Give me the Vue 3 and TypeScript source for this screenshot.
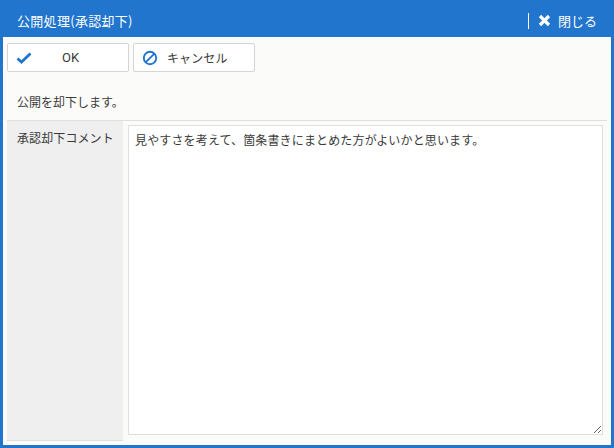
<script setup lang="ts">
const comment = '見やすさを考えて、箇条書きにまとめた方がよいかと思います。'
</script>

<template>
  <div class="dialog">
    <header class="head">
      <span class="title">公開処理(承認却下)</span>
      <button class="close" type="button">
        <svg width="13" height="13" viewBox="0 0 13 13"><path d="M2 2 11 11M11 2 2 11" stroke="#fff" stroke-width="3.2" fill="none"/></svg>
        <span>閉じる</span>
      </button>
    </header>
    <main class="body">
      <div class="actions">
        <button class="btn" type="button">
          <svg class="ico" width="16" height="14" viewBox="0 0 16 14"><path d="M1.5 7.5 5.5 11 14.5 2.5" stroke="#2175cd" stroke-width="2.8" fill="none"/></svg>
          <span class="lab ok">OK</span>
        </button>
        <button class="btn" type="button">
          <svg class="ico" width="16" height="16" viewBox="0 0 16 16"><circle cx="8" cy="8" r="6.2" stroke="#2175cd" stroke-width="1.9" fill="none"/><path d="M3.8 12.2 12.2 3.8" stroke="#2175cd" stroke-width="1.9"/></svg>
          <span class="lab">キャンセル</span>
        </button>
      </div>
      <p class="msg">公開を却下します。</p>
      <div class="row">
        <div class="label">承認却下コメント</div>
        <div class="field"><textarea class="area" :value="comment"></textarea></div>
      </div>
    </main>
  </div>
</template>

<style>
html, body { margin: 0; padding: 0; }
</style>

<style scoped>
.dialog {
  box-sizing: border-box;
  width: 614px;
  height: 448px;
  display: flex;
  flex-direction: column;
  border: 3px solid #2175cd;
  border-top: 0;
  background: #fbfbf9;
  font-family: "Noto Sans CJK JP", Roboto, sans-serif;
  font-size: 12px;
  color: #3a3a3a;
}
.head {
  flex: none;
  height: 37px;
  margin: 0 -3px;
  padding: 4px 17px 0 17px;
  box-sizing: border-box;
  display: flex;
  align-items: center;
  justify-content: space-between;
  background: #2175cd;
  color: #fff;
}
.title { font-size: 13px; letter-spacing: 0.3px; }
.close {
  display: flex;
  align-items: center;
  gap: 7px;
  height: 16px;
  padding: 0 0 0 9px;
  border: 0;
  border-left: 1px solid #fff;
  background: none;
  color: #fff;
  font: inherit;
  font-size: 13px;
}
.body {
  flex: 1;
  min-height: 0;
  display: flex;
  flex-direction: column;
  padding: 6px 4px 4px;
}
.actions { display: flex; gap: 4px; }
.btn {
  box-sizing: border-box;
  width: 122px;
  height: 29px;
  display: flex;
  align-items: center;
  padding: 0 0 0 8px;
  border: 1px solid #d4d4d4;
  border-radius: 2px;
  background: #fff;
  color: #3a3a3a;
  font: inherit;
}
.ico { flex: none; }
.lab { margin-left: 9px; letter-spacing: 0.1px; }
.ok { margin-left: 30px; font-size: 13px; font-family: Roboto, sans-serif; }
.msg {
  margin: 0;
  height: 48px;
  padding: 21px 0 0 10px;
  box-sizing: border-box;
  line-height: 18px;
}
.row {
  flex: 1;
  min-height: 0;
  display: flex;
  border-top: 1px solid #dfdfdd;
}
.label {
  box-sizing: border-box;
  width: 116px;
  flex: none;
  padding: 8px 0 0 10px;
  line-height: 18px;
  letter-spacing: 0.1px;
  background: #efefef;
  border-bottom: 1px solid #dfdfdd;
}
.field {
  flex: 1;
  display: flex;
  padding: 4px 4px 6px 5px;
}
.area {
  flex: 1;
  box-sizing: border-box;
  margin: 0;
  padding: 5px 6px;
  border: 1px solid #dfdfdd;
  border-radius: 0;
  outline: none;
  background: #fff;
  color: #3a3a3a;
  font: inherit;
  line-height: 18px;
  letter-spacing: 0.15px;
}
</style>
